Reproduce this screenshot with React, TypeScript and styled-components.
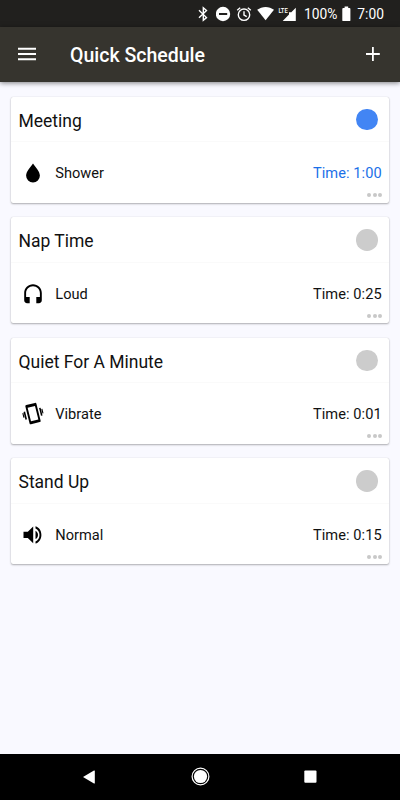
import React from "react";
import styled, { createGlobalStyle } from "styled-components";

const Reset = createGlobalStyle`
  * { box-sizing: border-box; }
  body { margin: 0; background: #f9f9ff; font-family: Roboto, sans-serif; }
`;

const Screen = styled.div`
  display: flex;
  flex-direction: column;
  width: 400px;
  height: 800px;
  overflow: hidden;
  background: #f9f9ff;
`;

const StatusBar = styled.div`
  display: flex;
  align-items: center;
  flex: none;
  height: 27px;
  padding: 1px 0 0 197px;
  background: #21201e;
  color: #fff;
`;

const StatusIcon = styled.svg<{ $gap: number }>`
  display: block;
  flex: none;
  margin-right: ${(p) => p.$gap}px;
`;

const StatusText = styled.span<{ $width: number }>`
  flex: none;
  width: ${(p) => p.$width}px;
  font-size: 13.8px;
  line-height: 16px;
  white-space: nowrap;
`;

const Toolbar = styled.header`
  display: flex;
  align-items: center;
  flex: none;
  height: 54.5px;
  padding: 0 20px 0 18px;
  background: #36342e;
  color: #fff;
  box-shadow: 0 1px 5px rgba(0, 0, 0, 0.5);
`;

const Title = styled.h1`
  flex: 1;
  margin: 3px 0 0 34px;
  font-size: 19.5px;
  line-height: 24px;
  font-weight: 500;
`;

const ToolIcon = styled.svg`
  display: block;
  flex: none;
`;

const List = styled.main`
  display: flex;
  flex-direction: column;
  gap: 14.9px;
  flex: 1;
  padding: 15.5px 10.7px 0;
`;

const Card = styled.section`
  height: 105.6px;
  flex: none;
  background: #fff;
  border-radius: 2px;
  box-shadow: 0 1px 2px rgba(0, 0, 0, 0.3), 0 0 1px rgba(0, 0, 0, 0.18);
`;

const CardHead = styled.div`
  display: flex;
  align-items: center;
  justify-content: space-between;
  height: 45.3px;
  padding: 1px 11.6px 0 7.8px;
  border-bottom: 1px solid #fafafa;
`;

const CardTitle = styled.h2`
  margin: 2px 0 0;
  font-size: 17.5px;
  line-height: 22px;
  font-weight: 400;
  color: #111;
`;

const Toggle = styled.span<{ $on?: boolean }>`
  width: 21.4px;
  height: 21.4px;
  border-radius: 50%;
  background: ${(p) => (p.$on ? "#4285f4" : "#cccccc")};
`;

const CardBody = styled.div`
  display: flex;
  align-items: center;
  height: 46px;
  margin-top: 8px;
  padding: 0 7.6px 0 10px;
  color: #111;
  font-size: 14.6px;
  line-height: 18px;
`;

const ModeIcon = styled.svg`
  display: block;
  width: 24px;
  height: 24px;
  margin-right: 10.6px;
`;

const Mode = styled.span`
  flex: 1;
`;

const Time = styled.span<{ $on?: boolean }>`
  letter-spacing: 0.07px;
  color: ${(p) => (p.$on ? "#1a6fe8" : "#111")};
`;

const More = styled.div`
  display: flex;
  justify-content: flex-end;
  gap: 1.8px;
  margin: -3px 7px 0 0;
`;

const Dot = styled.i`
  width: 4px;
  height: 4px;
  border-radius: 50%;
  background: #c8c8c8;
`;

const NavBar = styled.nav`
  display: flex;
  align-items: center;
  flex: none;
  height: 46.5px;
  padding-left: 83px;
  background: #000;
`;

const NavIcon = styled.svg<{ $gap?: number }>`
  display: block;
  flex: none;
  margin-right: ${(p) => p.$gap ?? 0}px;
`;

type Kind = "shower" | "loud" | "vibrate" | "normal";

const modeShapes: Record<Kind, React.ReactNode> = {
  shower: <path d="M12 2.4C9.3 6 5.1 10.7 5.1 14.5a6.9 6.9 0 0 0 13.8 0C18.9 10.7 14.7 6 12 2.4z" />,
  loud: (
    <path d="M12 2.3c-4.8 0-8.8 3.9-8.8 8.8v7.2c0 1.7 1.2 2.9 2.9 2.9h2.6v-6.3H5.1v-3.7c0-3.8 3-6.9 6.9-6.9s6.9 3.1 6.9 6.9v3.7h-3.6v6.3h2.6c1.7 0 2.9-1.2 2.9-2.9v-7.2c0-4.9-4-8.8-8.8-8.8z" />
  ),
  vibrate: (
    <g transform="translate(12 11.6) rotate(-14)">
      <path
        fillRule="evenodd"
        d="M-4.5-9.9h9q1.2 0 1.2 1.2V8.7q0 1.2-1.2 1.2h-9q-1.2 0-1.2-1.2V-8.7q0-1.2 1.2-1.2zM-3.8-7V7h7.6V-7z"
      />
      <path d="M-8.8-3.9h1.6v8h-1.6zM-10.3-2.9h1.1v4.6h-1.1zM7.2-3.9h1.6v8H7.2zM9.2-2.5h1.1v4.6h-1.1z" />
    </g>
  ),
  normal: (
    <path d="M2.5 8.7v6.3h4.3l5.400 5.3V3.4L6.8 8.700zm14.5 3.200c0-1.900-1-3.400-2.500-4.200v8.400c1.500-.8 2.500-2.300 2.500-4.200zM14.500 3.300v2.100c2.400.8 4 3.500 4 6.500s-1.600 5.700-4 6.500v2.100c3.500-.9 5.900-4.400 5.900-8.600s-2.400-7.700-5.900-8.600z" />
  ),
};

const schedules: { title: string; mode: string; kind: Kind; time: string; on?: boolean }[] = [
  { title: "Meeting", mode: "Shower", kind: "shower", time: "1:00", on: true },
  { title: "Nap Time", mode: "Loud", kind: "loud", time: "0:25" },
  { title: "Quiet For A Minute", mode: "Vibrate", kind: "vibrate", time: "0:01" },
  { title: "Stand Up", mode: "Normal", kind: "normal", time: "0:15" },
];

function Status() {
  return (
    <StatusBar>
      <StatusIcon $gap={7} width="12" height="16" viewBox="0 0 12 16" fill="none" stroke="#fff" strokeWidth="1.4">
        <path d="M2 4.3l7.5 7.3L6.3 14.3V1.7l3.2 2.8L2 11.7" />
      </StatusIcon>
      <StatusIcon $gap={5} width="15" height="16" viewBox="0 0 15 16">
        <circle cx="7" cy="8" r="7.2" fill="#fff" />
        <path d="M3 7h8.2v2H3z" fill="#21201e" />
      </StatusIcon>
      <StatusIcon $gap={5} width="16" height="16" viewBox="0 0 16 16" fill="none" stroke="#fff" strokeWidth="1.4">
        <circle cx="8" cy="8.7" r="5.7" />
        <path d="M8 5.3v3.8l2.7 1.6M1.2 4.2l3-2.5M14.8 4.2l-3-2.5" />
      </StatusIcon>
      <StatusIcon $gap={4} width="17" height="16" viewBox="0 0 17 16" fill="#fff">
        <path d="M.2 3.8C5-.1 12.2-.1 17 3.8L8.6 14.3z" />
      </StatusIcon>
      <StatusIcon $gap={8} width="18" height="16" viewBox="0 0 18 16" fill="#fff">
        <path d="M17.8 1.7V15H4.7L11 8.6V6.3h2.3z" />
        <text x=".4" y="6.6" fontSize="7.6" fontWeight="500" textLength="9.4" lengthAdjust="spacingAndGlyphs">
          LTE
        </text>
      </StatusIcon>
      <StatusText $width={37.6}>100%</StatusText>
      <StatusIcon $gap={6.7} width="9" height="16" viewBox="0 0 9 16" fill="#fff">
        <path d="M2.6.6h3.6v1.5h1.3q.9 0 .9.9v11.2q0 .9-.9.9H1.2q-.9 0-.9-.9V3q0-.9.9-.9h1.4z" />
      </StatusIcon>
      <StatusText $width={30}>7:00</StatusText>
    </StatusBar>
  );
}

export default function App() {
  return (
    <>
      <Reset />
      <Screen>
        <Status />
        <Toolbar>
          <ToolIcon width="18" height="14" viewBox="0 0 18 14" fill="#fff">
            <path d="M0 .8h18v2H0zM0 6h18v2H0zM0 11.2h18v2H0z" />
          </ToolIcon>
          <Title>Quick Schedule</Title>
          <ToolIcon width="16" height="16" viewBox="0 0 16 16" fill="#fff">
            <path d="M8 1h1.8v6.1h6v1.8h-6V15H8V8.9H2V7.1h6z" />
          </ToolIcon>
        </Toolbar>
        <List>
          {schedules.map((s) => (
            <Card key={s.title}>
              <CardHead>
                <CardTitle>{s.title}</CardTitle>
                <Toggle $on={s.on} />
              </CardHead>
              <CardBody>
                <ModeIcon viewBox="0 0 24 24">{modeShapes[s.kind]}</ModeIcon>
                <Mode>{s.mode}</Mode>
                <Time $on={s.on}>Time: {s.time}</Time>
              </CardBody>
              <More>
                <Dot />
                <Dot />
                <Dot />
              </More>
            </Card>
          ))}
        </List>
        <NavBar>
          <NavIcon $gap={95.5} width="12" height="14" viewBox="0 0 12 14" fill="#fff">
            <path d="M0 7L11 .6q.8-.4.8.4v12q0 .8-.8.4z" />
          </NavIcon>
          <NavIcon $gap={94.5} width="19" height="19" viewBox="0 0 19 19">
            <circle cx="9.5" cy="9.5" r="8.4" fill="none" stroke="#fff" strokeWidth="1.2" />
            <circle cx="9.5" cy="9.5" r="6.6" fill="#fff" />
          </NavIcon>
          <NavIcon width="13" height="13" viewBox="0 0 13 13">
            <rect x=".3" y=".5" width="12.2" height="12.2" rx="1" fill="#fff" />
          </NavIcon>
        </NavBar>
      </Screen>
    </>
  );
}
